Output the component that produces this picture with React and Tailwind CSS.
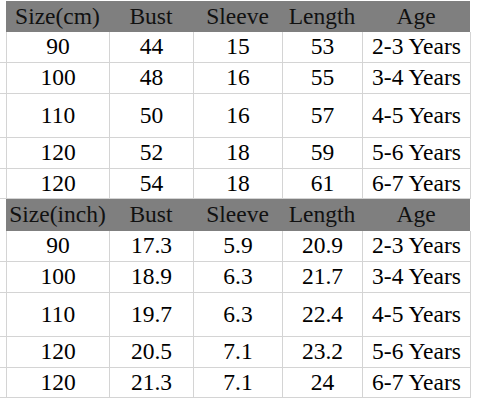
import React from 'react';

const cols = ['w-[103px]', 'w-[84px]', 'w-[89px]', 'w-[80px]', 'w-[108px]'];

const cmRows = [
  { h: 'h-[31px]', cells: ['90', '44', '15', '53', '2-3 Years'] },
  { h: 'h-[31px]', cells: ['100', '48', '16', '55', '3-4 Years'] },
  { h: 'h-[44px]', cells: ['110', '50', '16', '57', '4-5 Years'] },
  { h: 'h-[31px]', cells: ['120', '52', '18', '59', '5-6 Years'] },
  { h: 'h-[30px]', cells: ['120', '54', '18', '61', '6-7 Years'] },
];

const inchRows = [
  { h: 'h-[31px]', cells: ['90', '17.3', '5.9', '20.9', '2-3 Years'] },
  { h: 'h-[31px]', cells: ['100', '18.9', '6.3', '21.7', '3-4 Years'] },
  { h: 'h-[44px]', cells: ['110', '19.7', '6.3', '22.4', '4-5 Years'] },
  { h: 'h-[31px]', cells: ['120', '20.5', '7.1', '23.2', '5-6 Years'] },
  { h: 'h-[30px]', cells: ['120', '21.3', '7.1', '24', '6-7 Years'] },
];

function HeaderRow({ first, h }) {
  const labels = [first, 'Bust', 'Sleeve', 'Length', 'Age'];
  return (
    <div className={`flex ${h}`}>
      <div className="w-[6px] shrink-0" />
      <div className="flex bg-[#7f7f7f] text-[#111]">
        {labels.map((l, i) => (
          <div key={i} className={`${cols[i]} shrink-0 flex items-center justify-center`}>
            {l}
          </div>
        ))}
      </div>
    </div>
  );
}

function DataRow({ h, cells }) {
  return (
    <div className={`flex ${h} border-b border-[#d4d4d4] w-[471px]`}>
      <div className="w-[7px] shrink-0 border-r border-[#d4d4d4]" />
      {cells.map((c, i) => (
        <div
          key={i}
          className={`${cols[i]} shrink-0 flex items-center justify-center border-r border-[#d4d4d4]`}
        >
          {c}
        </div>
      ))}
    </div>
  );
}

export default function App() {
  return (
    <div className="w-[480px] h-[404px] bg-white pt-[1px] text-black text-[23.5px] leading-none overflow-hidden font-['Liberation_Serif']">
      {/* cm table */}
      <HeaderRow first="Size(cm)" h="h-[31px]" />
      {cmRows.map((r, i) => (
        <DataRow key={i} {...r} />
      ))}

      {/* inch table */}
      <HeaderRow first="Size(inch)" h="h-[32px]" />
      {inchRows.map((r, i) => (
        <DataRow key={i} {...r} />
      ))}
    </div>
  );
}
